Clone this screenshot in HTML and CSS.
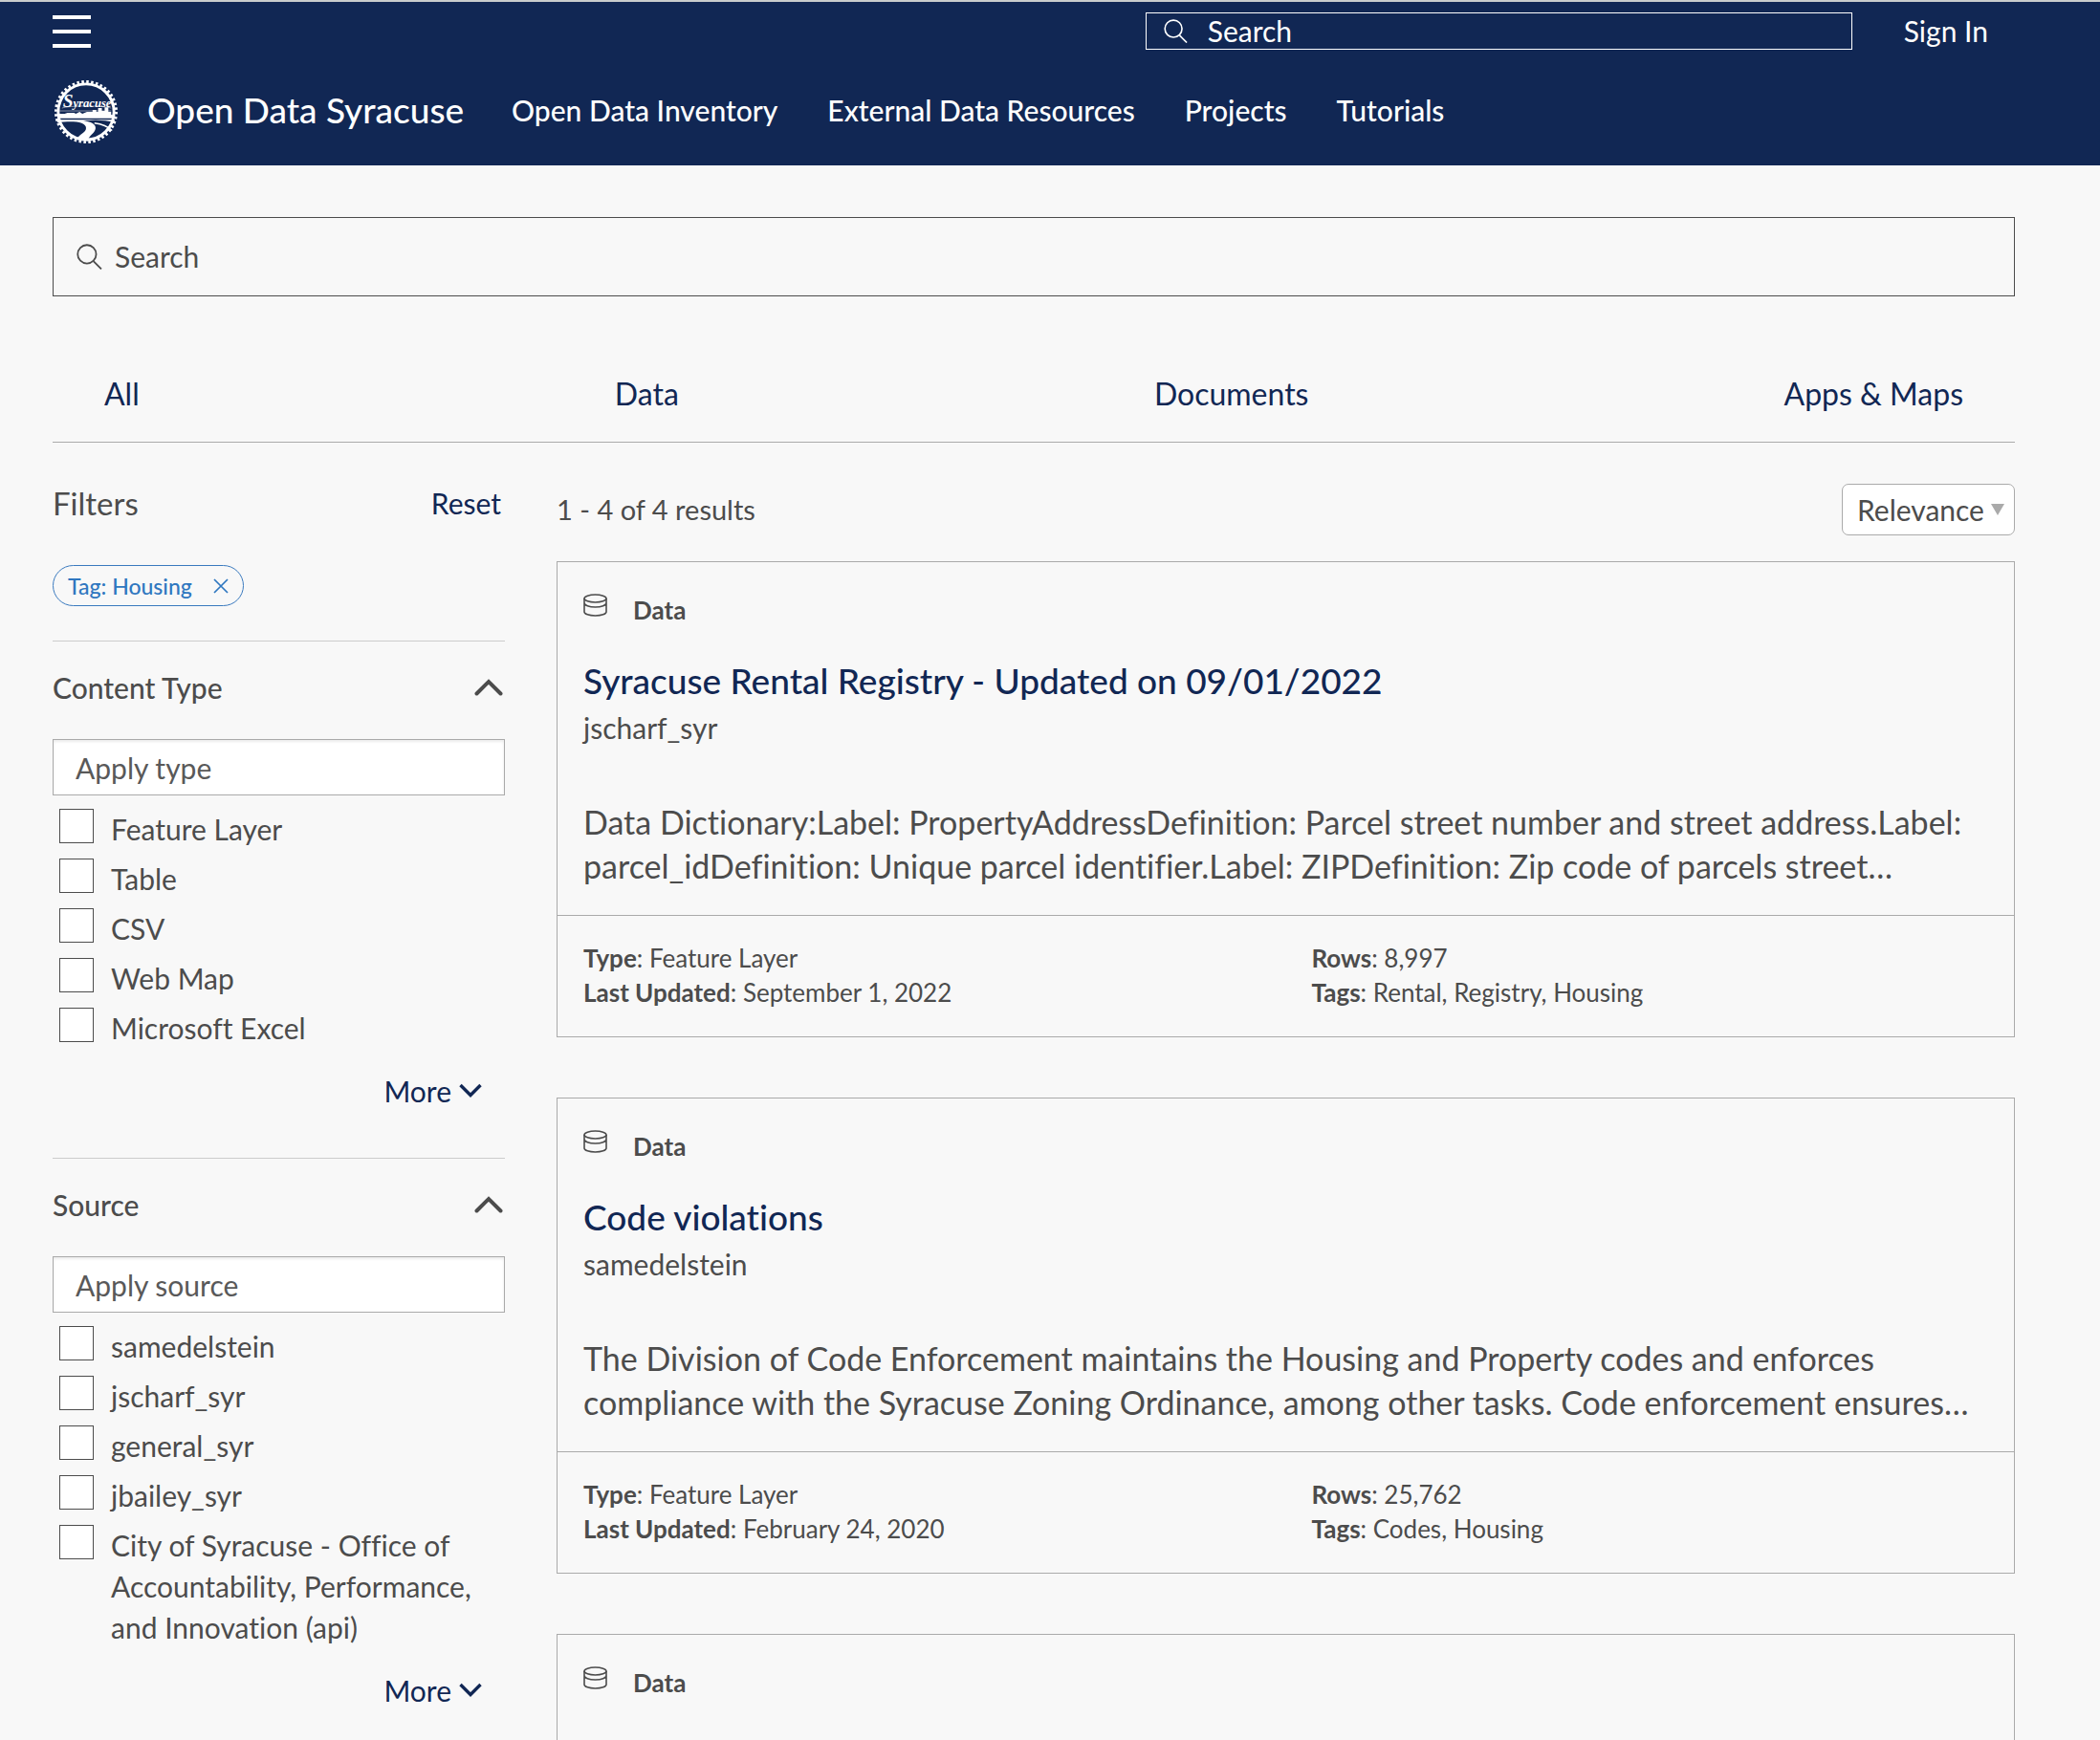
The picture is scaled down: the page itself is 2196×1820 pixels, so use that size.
FILE: index.html
```html
<!DOCTYPE html>
<html lang="en">
<head>
<meta charset="utf-8">
<meta name="viewport" content="width=device-width, initial-scale=1">
<title>Open Data Syracuse</title>
<link rel="stylesheet" href="styles.css">
</head>
<body>
<svg class="sprite" aria-hidden="true">
  <symbol id="icon-search" viewBox="0 0 26 26"><g fill="none" stroke="currentColor" stroke-width="1.7"><circle cx="10.5" cy="10.5" r="9.3"/><path d="M17 17.5l8 8"/></g></symbol>
  <symbol id="icon-data" viewBox="0 0 25 24"><g fill="none" stroke="currentColor" stroke-width="1.6"><ellipse cx="12.500" cy="5" rx="11.500" ry="4"/><path d="M1 5v14c0 2.300 5 4 11.500 4S24 21.300 24 19V5M1 9.500c0 2.700 5 4.500 11.500 4.500S24 12.200 24 9.500"/></g></symbol>
  <symbol id="icon-up" viewBox="0 0 30 18"><path d="M2.500 15.500L15 3l12.500 12.500" fill="none" stroke="currentColor" stroke-width="4" stroke-linecap="round"/></symbol>
  <symbol id="icon-down" viewBox="0 0 24 16"><path d="M1.500 2L12 12.500 22.500 2" fill="none" stroke="currentColor" stroke-width="3.400"/></symbol>
</svg>

<header class="site-header">
  <div class="topbar">
    <button class="menu-button" type="button" aria-label="Menu"><span></span><span></span><span></span></button>
    <div class="topbar-right">
      <label class="header-search">
        <svg class="icon-search" aria-hidden="true"><use href="#icon-search"/></svg>
        <input type="search" placeholder="Search" aria-label="Search site">
      </label>
      <a class="sign-in" href="#">Sign In</a>
    </div>
  </div>
  <div class="brandbar">
    <a class="brand" href="#">
      <svg class="logo" viewBox="0 0 70 70" aria-hidden="true">
        <circle cx="35" cy="35" r="32.500" fill="none" stroke="#fff" stroke-width="3" stroke-dasharray="2.600 2.505"/>
        <circle cx="35" cy="35" r="30" fill="none" stroke="#fff" stroke-width="3"/>
        <path d="M9 31c7-3 45-3 53 0M6 34h56" fill="none" stroke="#fff" stroke-opacity=".5"/>
        <path d="M5 42v-5h7l3-1h7l2 1 4-2 3 2 5-2h6v-2h4v2h2v-4h4v3h3v-4h4v5h3v3h4v4z" fill="#fff"/>
        <path d="M4 43.500h62l-1 3c-9-3-20-3-33-2 16 2 15 9 10 14-3 3-5 5-5 8l-12-2c2-5 10-7 10-12 0-7-14-8-31-6z" fill="#fff"/>
        <path d="M44 47c8 1 15 4 19 8" fill="none" stroke="#fff" stroke-width="1.500"/>
        <text class="logo-word" x="10" y="30"><tspan font-size="20">S</tspan>yracuse</text>
      </svg>
      <span class="brand-name">Open Data Syracuse</span>
    </a>
    <nav class="main-nav" aria-label="Main">
      <a href="#">Open Data Inventory</a>
      <a href="#">External Data Resources</a>
      <a href="#">Projects</a>
      <a href="#">Tutorials</a>
    </nav>
  </div>
</header>

<main class="page">
  <label class="main-search">
    <svg class="icon-search" aria-hidden="true"><use href="#icon-search"/></svg>
    <input type="search" placeholder="Search" aria-label="Search content">
  </label>

  <nav class="tabs" aria-label="Content">
    <a href="#">All</a>
    <a href="#">Data</a>
    <a href="#">Documents</a>
    <a href="#">Apps &amp; Maps</a>
  </nav>

  <div class="columns">
    <aside class="filters">
      <div class="filters-head">
        <h2>Filters</h2>
        <button class="reset" type="button">Reset</button>
      </div>
      <div class="chip">
        <span>Tag: Housing</span>
        <button type="button" aria-label="Remove Housing tag">
          <svg viewBox="0 0 16 16" aria-hidden="true"><path d="M1 1l14 14M15 1L1 15" fill="none" stroke="currentColor" stroke-width="1.700"/></svg>
        </button>
      </div>

      <section class="facet">
        <button class="facet-head" type="button" aria-expanded="true">Content Type<svg class="icon-up" aria-hidden="true"><use href="#icon-up"/></svg></button>
        <input class="facet-input" type="text" placeholder="Apply type" aria-label="Apply type">
        <ul class="options">
          <li><label><input type="checkbox">Feature Layer</label></li>
          <li><label><input type="checkbox">Table</label></li>
          <li><label><input type="checkbox">CSV</label></li>
          <li><label><input type="checkbox">Web Map</label></li>
          <li><label><input type="checkbox">Microsoft Excel</label></li>
        </ul>
        <button class="more" type="button">More<svg class="icon-down" aria-hidden="true"><use href="#icon-down"/></svg></button>
      </section>

      <section class="facet">
        <button class="facet-head" type="button" aria-expanded="true">Source<svg class="icon-up" aria-hidden="true"><use href="#icon-up"/></svg></button>
        <input class="facet-input" type="text" placeholder="Apply source" aria-label="Apply source">
        <ul class="options">
          <li><label><input type="checkbox">samedelstein</label></li>
          <li><label><input type="checkbox">jscharf_syr</label></li>
          <li><label><input type="checkbox">general_syr</label></li>
          <li><label><input type="checkbox">jbailey_syr</label></li>
          <li><label><input type="checkbox">City of Syracuse - Office of Accountability, Performance, and Innovation (api)</label></li>
        </ul>
        <button class="more" type="button">More<svg class="icon-down" aria-hidden="true"><use href="#icon-down"/></svg></button>
      </section>
    </aside>

    <section class="results">
      <div class="results-head">
        <p>1 - 4 of 4 results</p>
        <div class="sort">
          <select aria-label="Sort by">
            <option>Relevance</option>
            <option>Name</option>
            <option>Date</option>
          </select>
          <svg viewBox="0 0 14 12" aria-hidden="true"><path d="M0 0h14L7 12z" fill="#aaa"/></svg>
        </div>
      </div>

      <article class="card">
        <div class="card-body">
          <p class="kind"><svg aria-hidden="true"><use href="#icon-data"/></svg>Data</p>
          <h3><a href="#">Syracuse Rental Registry - Updated on 09/01/2022</a></h3>
          <p class="owner">jscharf_syr</p>
          <p class="summary">Data Dictionary:Label: PropertyAddressDefinition: Parcel street number and street address.Label: parcel_idDefinition: Unique parcel identifier.Label: ZIPDefinition: Zip code of parcels street…</p>
        </div>
        <ul class="meta">
          <li><b>Type</b>: Feature Layer</li>
          <li><b>Rows</b>: 8,997</li>
          <li><b>Last Updated</b>: September 1, 2022</li>
          <li><b>Tags</b>: Rental, Registry, Housing</li>
        </ul>
      </article>

      <article class="card">
        <div class="card-body">
          <p class="kind"><svg aria-hidden="true"><use href="#icon-data"/></svg>Data</p>
          <h3><a href="#">Code violations</a></h3>
          <p class="owner">samedelstein</p>
          <p class="summary">The Division of Code Enforcement maintains the Housing and Property codes and enforces compliance with the Syracuse Zoning Ordinance, among other tasks. Code enforcement ensures…</p>
        </div>
        <ul class="meta">
          <li><b>Type</b>: Feature Layer</li>
          <li><b>Rows</b>: 25,762</li>
          <li><b>Last Updated</b>: February 24, 2020</li>
          <li><b>Tags</b>: Codes, Housing</li>
        </ul>
      </article>

      <article class="card">
        <div class="card-body">
          <p class="kind"><svg aria-hidden="true"><use href="#icon-data"/></svg>Data</p>
          <h3><a href="#">Unfit Properties</a></h3>
        </div>
      </article>
    </section>
  </div>
</main>
</body>
</html>
```
FILE: styles.css
```css
* { box-sizing: border-box; }

html { scrollbar-width: none; }

body {
  margin: 0;
  background: #f8f8f8;
  color: #4c4c4c;
  font: 400 30px/44px Lato, "Open Sans", sans-serif;
  font-variant-ligatures: no-common-ligatures;
}

a { color: inherit; text-decoration: none; }
h2, h3, p, ul { margin: 0; padding: 0; font-weight: 400; }
ul { list-style: none; }
svg { display: block; flex: none; }

button, input, select {
  margin: 0;
  padding: 0;
  border: 0;
  border-radius: 0;
  background: none;
  color: inherit;
  font: inherit;
  appearance: none;
}

.sprite { position: absolute; width: 0; height: 0; }

/* Header */
.site-header {
  padding: 11px 89px 22px 55px;
  border-top: 2px solid #c9cccc;
  background: #112754;
  color: #fff;
}

.topbar, .topbar-right, .brandbar, .brand, .main-nav { display: flex; align-items: center; }
.topbar { justify-content: space-between; height: 39px; }
.topbar-right { gap: 54px; padding-right: 28px; }
.sign-in { padding-bottom: 2px; }

.menu-button { display: grid; gap: 11px; width: 40px; }
.menu-button span { height: 4px; background: #fff; }

.header-search {
  display: flex;
  align-items: center;
  gap: 21px;
  width: 739px;
  height: 39px;
  padding-left: 18px;
  border: 1px solid #fff;
}
.header-search .icon-search { width: 25px; height: 25px; }
.header-search input, .main-search input { flex: 1; min-width: 0; padding-bottom: 2px; }
.header-search input::placeholder { color: #fff; opacity: 1; }

.brandbar { margin-top: 31px; gap: 50px; }
.brand { gap: 29px; }
.logo { width: 70px; height: 68px; }
.logo-word { fill: #fff; font: italic 700 13px "Liberation Serif", serif; }
.brand-name { padding-bottom: 4px; font-size: 37px; font-weight: 500; }
.main-nav { gap: 52px; padding-bottom: 4px; font-weight: 500; }

/* Page */
.page { padding: 54px 89px 0 55px; }

.main-search {
  display: flex;
  align-items: center;
  gap: 13px;
  height: 83px;
  padding: 0 24px;
  border: 1px solid #4c4c4c;
}
.main-search .icon-search { width: 27px; height: 27px; }
.main-search input::placeholder { color: #4c4c4c; opacity: 1; }

.tabs {
  display: flex;
  justify-content: space-between;
  margin-top: 80px;
  padding: 0 54px 28px;
  border-bottom: 1px solid #aaa;
  color: #112754;
  font-size: 32px;
}

.columns { display: grid; grid-template-columns: 473px 1fr; gap: 54px; }

/* Filters */
.filters { padding-top: 41px; }
.filters-head { display: flex; justify-content: space-between; align-items: center; padding-right: 4px; }
.filters-head h2 { font-size: 33px; }
.reset, .more { color: #112754; }

.chip {
  display: inline-flex;
  align-items: center;
  gap: 22px;
  height: 43px;
  margin: 43px 0 36px;
  padding: 0 15px;
  border: 1px solid #3a7abf;
  border-radius: 22px;
  color: #2f77c0;
  font-size: 23px;
  font-weight: 500;
  vertical-align: top;
}
.chip svg { width: 16px; height: 16px; }

.facet { padding: 26px 0 48px; border-top: 1px solid #ccc; }
.facet-head {
  display: flex;
  justify-content: space-between;
  align-items: center;
  width: 100%;
  margin-bottom: 32px;
  padding-right: 2px;
  font-weight: 500;
}
.icon-up { width: 30px; height: 18px; }
.icon-down { width: 24px; height: 16px; }

.facet-input {
  display: block;
  width: 100%;
  height: 59px;
  padding: 0 23px;
  border: 1px solid #aaa;
  background: #fff;
  box-shadow: inset 0 2px 3px rgba(0, 0, 0, .08);
}
.facet-input::placeholder { color: #595959; opacity: 1; }

.options { display: grid; gap: 9px; margin: 14px 0 22px 7px; }
.options label { display: flex; align-items: flex-start; gap: 18px; line-height: 43px; }
.options input { flex: none; width: 36px; height: 36px; border: 1px solid #4c4c4c; background: #fff; }

.more { display: flex; align-items: center; gap: 8px; margin-left: auto; padding-right: 24px; }

/* Results */
.results { padding-top: 43px; }
.results-head { display: flex; justify-content: space-between; align-items: center; margin-bottom: 27px; }
.results-head p { font-size: 29px; }

.sort { display: grid; align-items: center; }
.sort select, .sort svg { grid-area: 1 / 1; }
.sort select {
  width: 181px;
  height: 54px;
  padding: 0 32px 0 15px;
  border: 1px solid #aaa;
  border-radius: 7px;
  background: #fff;
}
.sort svg { justify-self: end; width: 14px; height: 12px; margin-right: 11px; pointer-events: none; }

.card { margin-bottom: 63px; border: 1px solid #aaa; }
.card-body { padding: 33px 27px 28px; }

.kind { display: flex; align-items: flex-start; gap: 27px; font-size: 26px; font-weight: 700; line-height: 34px; }
.kind svg { width: 25px; height: 24px; }
.card h3 { margin-top: 33px; color: #112754; font-size: 37px; font-weight: 500; line-height: 48px; }
.owner { line-height: 50px; }
.summary { margin-top: 51px; font-size: 34px; line-height: 46px; }

.meta {
  display: grid;
  grid-template-columns: 1fr 1fr;
  padding: 26px 0 28px;
  border-top: 1px solid #aaa;
  font-size: 26px;
  line-height: 36px;
}
.meta li { padding: 0 27px; }
.meta b { font-weight: 700; }
```
